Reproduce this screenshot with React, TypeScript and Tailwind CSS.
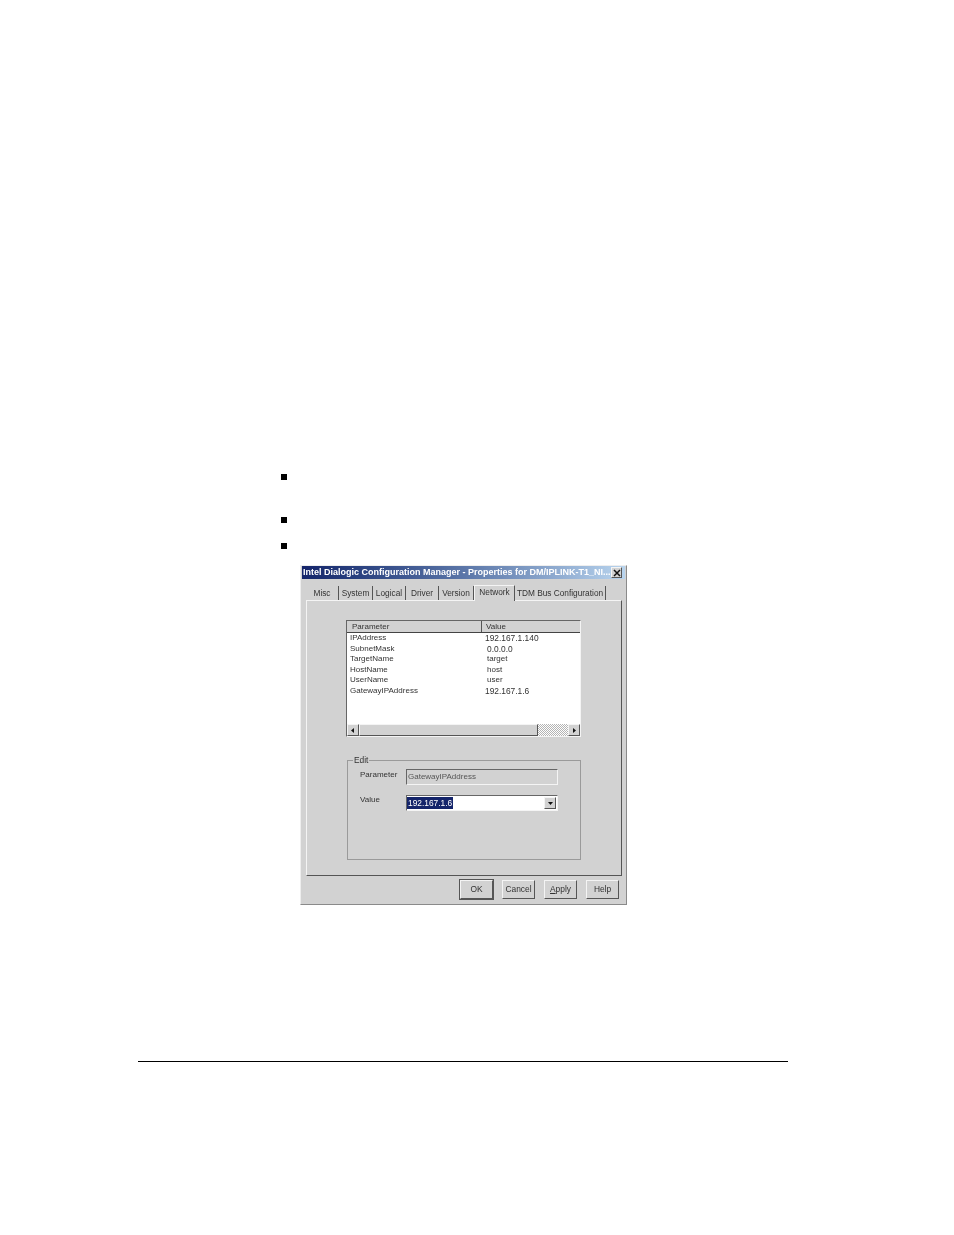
const tabs = [
  { label: "Misc", w: "w-[33px]" },
  { label: "System", w: "w-[34px]" },
  { label: "Logical", w: "w-[33px]" },
  { label: "Driver", w: "w-[33px]" },
  { label: "Version", w: "w-[35px]" },
];

const params = [
  { name: "IPAddress", value: "192.167.1.140", cls: "text-[8.4px]" },
  { name: "SubnetMask", value: "0.0.0.0", cls: "text-[8.4px] pl-[2px]" },
  { name: "TargetName", value: "target", cls: "text-[8px] pl-[2px]" },
  { name: "HostName", value: "host", cls: "text-[8px] pl-[2px]" },
  { name: "UserName", value: "user", cls: "text-[8px] pl-[2px]" },
  { name: "GatewayIPAddress", value: "192.167.1.6", cls: "text-[8.4px]" },
];

const raised =
  "border border-t-[#f4f4f4] border-l-[#f4f4f4] border-r-[#555555] border-b-[#555555]";
const sunken =
  "border border-t-[#666666] border-l-[#666666] border-r-[#f4f4f4] border-b-[#f4f4f4]";

function Bullet({ className }: { className: string }) {
  return <div className={`w-[6px] h-[6px] bg-black ${className}`} />;
}

function ScrollButton({ dir }: { dir: "left" | "right" | "down" }) {
  const points =
    dir === "left" ? "5,2 5,7 2,4.5" : dir === "right" ? "3,2 3,7 6,4.5" : "2,3 7,3 4.5,6";
  return (
    <div className={`w-[12px] h-[12px] shrink-0 bg-[#d2d2d2] flex items-center justify-center ${raised}`}>
      <svg width="9" height="9" viewBox="0 0 9 9">
        <polygon points={points} fill="#111" />
      </svg>
    </div>
  );
}

function DialogButton({ label, w, active }: { label: React.ReactNode; w: string; active?: boolean }) {
  return (
    <div
      className={`${w} h-[19px] flex items-center justify-center text-[8.4px] text-[#333] ${raised} ${
        active ? "outline outline-1 outline-[#555]" : ""
      }`}
    >
      {label}
    </div>
  );
}

function Dialog() {
  return (
    <div className="ml-[300px] w-[327px] h-[340px] bg-[#d2d2d2] px-[2px] flex flex-col border border-[#8a8a8a] border-t-[#eeeeee] border-l-[#eeeeee] [font-family:'Liberation_Sans',Arial,sans-serif] text-[#333] blur-[0.3px]">
      <div className="h-[13px] -mx-[1px] flex items-center justify-between pl-[1px] pr-[3px] bg-gradient-to-r from-[#14246a] via-[#5b76a8] to-[#b8d4ee]">
        <span className="text-[9px] font-bold text-white leading-none whitespace-nowrap">
          Intel Dialogic Configuration Manager - Properties for DM/IPLINK-T1_NI...
        </span>
        <div className={`w-[11px] h-[11px] shrink-0 bg-[#d2d2d2] flex items-center justify-center ${raised}`}>
          <svg width="8" height="8" viewBox="0 0 8 8">
            <path d="M1 1 L7 7 M7 1 L1 7" stroke="#111" strokeWidth="1.5" />
          </svg>
        </div>
      </div>

      <div className="flex items-end h-[21px] pl-[3px] text-[8.3px]">
        {tabs.map((tab) => (
          <div
            key={tab.label}
            className={`${tab.w} h-[14px] flex items-center justify-center border-r border-r-[#555555]`}
          >
            {tab.label}
          </div>
        ))}
        <div className="w-[41px] h-[16px] flex items-start justify-center bg-[#d2d2d2] border-t border-l border-t-[#f4f4f4] border-l-[#f4f4f4] border-r border-r-[#555555] relative top-[1px] z-10 leading-[13px]">
          Network
        </div>
        <div className="w-[91px] h-[14px] flex items-center justify-center border-r border-r-[#555555] whitespace-nowrap">
          TDM Bus Configuration
        </div>
      </div>

      <div className="ml-[3px] w-[316px] h-[276px] border border-t-[#f4f4f4] border-l-[#f4f4f4] border-r-[#555555] border-b-[#555555] pt-[19px] pl-[39px]">
        <div className={`w-[235px] h-[117px] bg-white flex flex-col text-[8px] ${sunken}`}>
          <div className="flex h-[12px] bg-[#d2d2d2] border-b border-b-[#444] shrink-0">
            <div className="w-[135px] pl-[5px] border-r border-r-[#555] leading-[11px]">Parameter</div>
            <div className="flex-1 pl-[4px] leading-[11px]">Value</div>
          </div>
          <div className="flex-1 pl-[3px]">
            {params.map((p) => (
              <div key={p.name} className="flex h-[10.5px] items-center leading-none">
                <div className="w-[135px]">{p.name}</div>
                <div className={p.cls}>{p.value}</div>
              </div>
            ))}
          </div>
          <div className="flex h-[12px] shrink-0 bg-[#d2d2d2]">
            <ScrollButton dir="left" />
            <div className={`w-[179px] ${raised}`} />
            <div className="flex-1 bg-[repeating-conic-gradient(#ffffff_0_25%,#b4b4b4_0_50%)] bg-[length:2px_2px]" />
            <ScrollButton dir="right" />
          </div>
        </div>

        <div className="mt-[23px] ml-[1px] w-[234px] h-[100px] border border-[#9a9a9a] relative text-[8px] pl-[12px] pt-[8px]">
          <span className="absolute -top-[6px] left-[5px] bg-[#d2d2d2] px-[1px] leading-[11px] text-[8.4px]">Edit</span>
          <div className="flex items-start">
            <span className="w-[46px] leading-[11px]">Parameter</span>
            <div className={`w-[152px] h-[16px] flex items-center pl-[1px] text-[#555] ${sunken}`}>
              GatewayIPAddress
            </div>
          </div>
          <div className="flex items-start mt-[9px]">
            <span className="w-[46px] leading-[11px]">Value</span>
            <div className={`w-[152px] h-[16px] mt-[1px] bg-white flex items-center justify-between pr-[1px] ${sunken}`}>
              <span className="bg-[#14246a] text-white h-[12px] px-[1px] leading-[12px] text-[8.4px]">192.167.1.6</span>
              <ScrollButton dir="down" />
            </div>
          </div>
        </div>
      </div>

      <div className="flex justify-end gap-[9px] pr-[5px] mt-[4px]">
        <DialogButton label="OK" w="w-[33px]" active />
        <DialogButton label="Cancel" w="w-[33px]" />
        <DialogButton
          label={
            <span>
              <span className="underline">A</span>pply
            </span>
          }
          w="w-[33px]"
        />
        <DialogButton label="Help" w="w-[33px]" />
      </div>
    </div>
  );
}

export default function App() {
  return (
    <div className="w-[954px] h-[1235px] bg-white pt-[474px] overflow-hidden">
      <Bullet className="ml-[281px]" />
      <Bullet className="ml-[281px] mt-[37px]" />
      <Bullet className="ml-[281px] mt-[20px]" />
      <div className="mt-[16px]">
        <Dialog />
      </div>
      <div className="mt-[156px] ml-[138px] w-[650px] h-px bg-black" />
    </div>
  );
}
